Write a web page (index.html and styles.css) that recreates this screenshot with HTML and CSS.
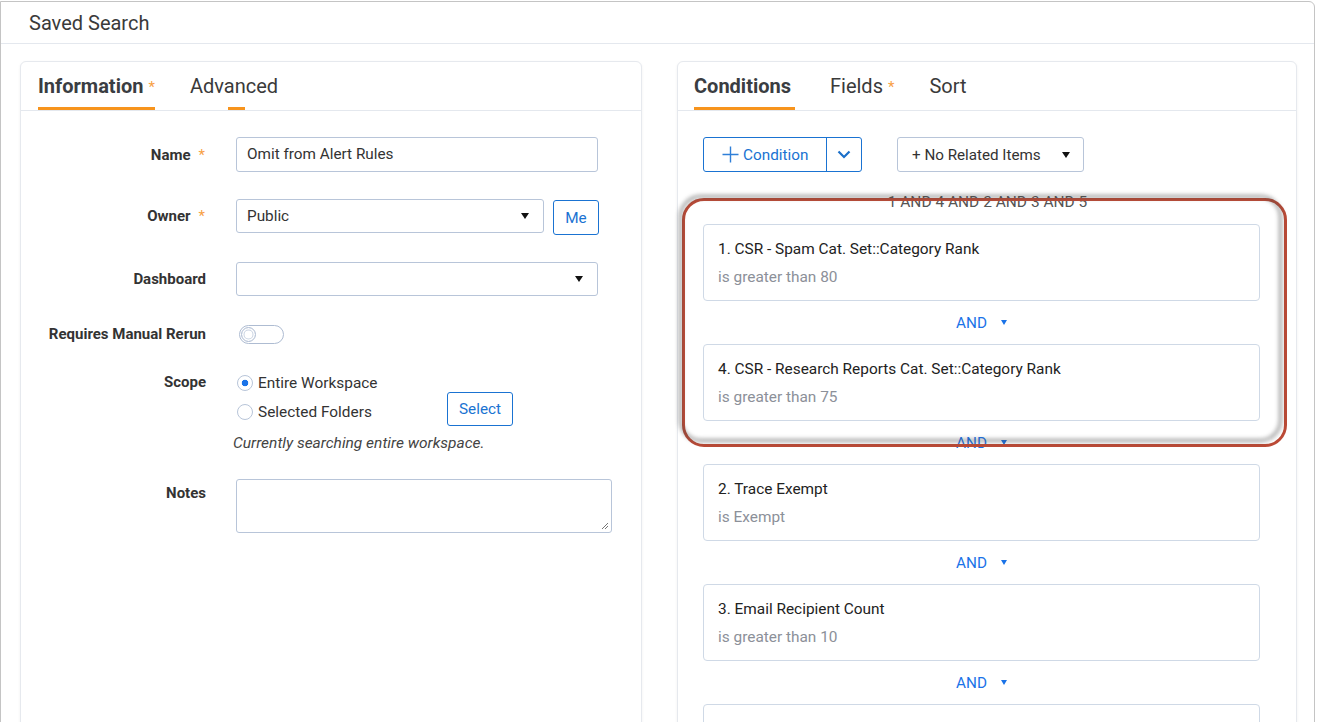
FILE: index.html
```html
<!DOCTYPE html>
<html>
<head>
<meta charset="utf-8">
<title>Saved Search</title>
<link rel="stylesheet" href="styles.css">
</head>
<body>
<div class="page">
  <div class="page-header">Saved Search</div>
  <div class="page-body">
    <section class="card">
      <div class="tabs">
        <div class="tab active">Information<span class="tab-req">*</span></div>
        <div class="tab hover">Advanced</div>
      </div>
      <div class="form">
        <div class="row r-name">
          <div class="lbl">Name<span class="req">*</span></div>
          <div class="field w-wide">Omit from Alert Rules</div>
        </div>
        <div class="row r-owner">
          <div class="lbl">Owner<span class="req">*</span></div>
          <div class="field select w-owner"><span>Public</span><span class="caret"></span></div>
          <div class="btn-outline me">Me</div>
        </div>
        <div class="row r-dash">
          <div class="lbl">Dashboard</div>
          <div class="field select w-wide"><span></span><span class="caret"></span></div>
        </div>
        <div class="row r-toggle">
          <div class="lbl">Requires Manual Rerun</div>
          <div class="toggle"><span class="knob"></span></div>
        </div>
        <div class="row r-scope">
          <div class="lbl lbl-line">Scope</div>
          <div class="scope">
            <div class="radio-line"><span class="radio checked"></span>Entire Workspace</div>
            <div class="radio-line"><span class="radio-wrap"><span class="radio"></span>Selected Folders</span><span class="btn-outline select-btn">Select</span></div>
            <div class="scope-note">Currently searching entire workspace.</div>
          </div>
        </div>
        <div class="row r-notes">
          <div class="lbl lbl-notes">Notes</div>
          <div class="textarea"><svg class="grip" width="8" height="8" viewBox="0 0 8 8"><path d="M7 1 L1 7 M7 4 L4 7" stroke="#777" stroke-width="1"/></svg></div>
        </div>
      </div>
    </section>

    <section class="card card-right">
      <div class="tabs">
        <div class="tab active tab-cond">Conditions</div>
        <div class="tab">Fields<span class="tab-req">*</span></div>
        <div class="tab">Sort</div>
      </div>
      <div class="cond-body">
        <div class="toolbar">
          <div class="btn-group">
            <div class="bg-main">
              <svg width="17" height="17" viewBox="0 0 17 17"><path d="M8.5 0.5 V16.5 M0.5 8.5 H16.5" stroke="#2f7fd8" stroke-width="1.4"/></svg>
              <span>Condition</span>
            </div>
            <div class="bg-arrow">
              <svg width="14" height="9" viewBox="0 0 14 9"><path d="M1.5 1.5 L7 7 L12.5 1.5" fill="none" stroke="#1a6fc9" stroke-width="2.2"/></svg>
            </div>
          </div>
          <div class="related">
            <span>+ No Related Items</span><span class="caret"></span>
          </div>
        </div>
        <div class="expr">1 AND 4 AND 2 AND 3 AND 5</div>
        <div class="cond-list">
          <div class="cond">
            <div class="cond-title">1. CSR - Spam Cat. Set::Category Rank</div>
            <div class="cond-sub">is greater than 80</div>
          </div>
          <div class="and-row"><span>AND</span><span class="and-caret"></span></div>
          <div class="cond">
            <div class="cond-title">4. CSR - Research Reports Cat. Set::Category Rank</div>
            <div class="cond-sub">is greater than 75</div>
          </div>
          <div class="and-row"><span>AND</span><span class="and-caret"></span></div>
          <div class="cond">
            <div class="cond-title">2. Trace Exempt</div>
            <div class="cond-sub">is Exempt</div>
          </div>
          <div class="and-row"><span>AND</span><span class="and-caret"></span></div>
          <div class="cond">
            <div class="cond-title">3. Email Recipient Count</div>
            <div class="cond-sub">is greater than 10</div>
          </div>
          <div class="and-row"><span>AND</span><span class="and-caret"></span></div>
          <div class="cond">
            <div class="cond-title">5. Has Attachment Count</div>
            <div class="cond-sub">is greater than 0</div>
          </div>
        </div>
      </div>
      <div class="highlight"></div>
    </section>
  </div>
</div>
</body>
</html>
```

FILE: styles.css
```css
* { box-sizing: border-box; }

html, body {
  margin: 0;
  padding: 0;
  background: #ffffff;
  overflow: hidden;
  height: 722px;
}

body {
  font-family: Roboto, "Liberation Sans", Arial, sans-serif;
  color: #333;
}

.page {
  width: 1315px;
  height: 780px;
  margin-top: 1px;
  border: 1px solid #c4c4c4;
  border-radius: 0 6px 0 0;
  background: #fff;
}

.page-header {
  height: 42px;
  line-height: 42px;
  padding-left: 28px;
  font-size: 20px;
  color: #3a3a3a;
  border-bottom: 1px solid #e4e8ee;
}

.page-body {
  display: grid;
  grid-template-columns: 622px 620px;
  column-gap: 35px;
  padding: 17px 16px 0 19px;
}

.card {
  border: 1px solid #e6e9ee;
  border-radius: 6px;
  box-shadow: 0 1px 3px rgba(0, 0, 0, 0.06);
  height: 700px;
  background: #fff;
}

.card-right {
  position: relative;
}

/* Tabs */
.tabs {
  display: flex;
  gap: 35px;
  padding-left: 17px;
  height: 49px;
  border-bottom: 1px solid #e4e8ee;
}

.tab {
  height: 48px;
  padding-top: 14px;
  line-height: 20px;
  font-size: 20px;
  color: #3a3a3a;
  border-bottom: 3px solid transparent;
  white-space: nowrap;
}

.tab.active {
  font-weight: bold;
  color: #3a3d42;
  border-bottom-color: #f7941d;
}

.tab-cond {
  margin-left: -1px;
  padding-right: 4px;
}

.tab.hover {
  background-image: linear-gradient(#f7941d, #f7941d);
  background-size: 17px 3px;
  background-repeat: no-repeat;
  background-position: 54% 100%;
  border-bottom: 0;
  height: 48px;
}

.tab-req {
  color: #f7a045;
  font-size: 15px;
  font-weight: normal;
  margin-left: 5px;
  vertical-align: 1px;
}

/* Form */
.form {
  padding: 26px 0 0 27px;
}

.row {
  display: flex;
  align-items: center;
}

.r-owner { margin-top: 27px; align-items: flex-start; }
.r-owner .lbl { line-height: 34px; }
.r-dash { margin-top: 27px; }
.r-toggle { margin-top: 28px; height: 20px; }
.r-scope { margin-top: 24px; align-items: flex-start; }
.r-notes { margin-top: 26px; align-items: flex-start; }

.lbl {
  width: 158px;
  margin-right: 30px;
  text-align: right;
  font-size: 15px;
  font-weight: bold;
  color: #333;
  white-space: nowrap;
  flex-shrink: 0;
}

.lbl-line { line-height: 29px; }
.lbl-notes { line-height: 28px; }

.req {
  color: #f7a045;
  font-weight: normal;
  margin-left: 8px;
  margin-right: 1px;
}

.field {
  height: 35px;
  border: 1px solid #b8c5d9;
  border-radius: 3px;
  padding: 0 10px;
  font-size: 15.3px;
  line-height: 33px;
  color: #333;
  background: #fff;
}

.r-owner .field, .r-dash .field { height: 34px; line-height: 32px; }

.w-wide { width: 362px; }
.w-owner { width: 308px; }

.select {
  display: flex;
  align-items: center;
  justify-content: space-between;
  padding-right: 14px;
}

.caret {
  width: 0;
  height: 0;
  border-left: 4.5px solid transparent;
  border-right: 4.5px solid transparent;
  border-top: 6px solid #111;
}

.btn-outline {
  border: 1px solid #1a73d2;
  border-radius: 3px;
  color: #1a73d2;
  font-size: 15.3px;
  display: flex;
  align-items: center;
  justify-content: center;
  background: #fff;
}

.me {
  width: 46px;
  height: 35px;
  margin-left: 9px;
  margin-top: 1px;
}

.toggle {
  width: 45px;
  height: 19px;
  border: 1px solid #aebcd2;
  border-radius: 10px;
  margin-left: 3px;
  display: flex;
  align-items: center;
  padding-left: 1px;
}

.knob {
  width: 15px;
  height: 15px;
  border-radius: 50%;
  border: 1px solid #aebcd2;
  box-shadow: inset 0 0 0 1.5px #fff, inset 0 0 0 2.5px #c9d3e2;
}

.scope {
  display: flex;
  flex-direction: column;
  font-size: 15.4px;
  color: #333;
}

.radio-line {
  display: flex;
  align-items: center;
  height: 29px;
}

.radio-wrap {
  display: flex;
  align-items: center;
  width: 211px;
}

.radio {
  width: 16px;
  height: 16px;
  border-radius: 50%;
  border: 1px solid #b8c5d9;
  margin-left: 1px;
  margin-right: 5px;
  flex-shrink: 0;
  background: #fff;
}

.radio.checked {
  background: radial-gradient(circle, #1a73e8 0, #1a73e8 3px, #fff 3.6px);
}

.select-btn {
  width: 66px;
  height: 34px;
  align-self: flex-start;
  margin-top: -5px;
}

.scope-note {
  margin-top: 7px;
  margin-left: -3px;
  font-style: italic;
  font-size: 15.5px;
  line-height: 20px;
  color: #444;
}

.textarea {
  width: 376px;
  height: 54px;
  border: 1px solid #b8c5d9;
  border-radius: 3px;
  display: flex;
  justify-content: flex-end;
  align-items: flex-end;
  padding: 0 2px 2px 0;
}

/* Conditions */
.cond-body {
  padding: 26px 0 0 25px;
}

.toolbar {
  display: flex;
  gap: 35px;
}

.btn-group {
  display: flex;
  height: 35px;
  border: 1px solid #1a73d2;
  border-radius: 3px;
}

.bg-main {
  width: 123px;
  display: flex;
  align-items: center;
  gap: 4px;
  padding-left: 18px;
  color: #1a73d2;
  font-size: 15.3px;
  border-right: 1px solid #1a73d2;
}

.bg-arrow {
  width: 34px;
  display: flex;
  align-items: center;
  justify-content: center;
}

.related {
  width: 187px;
  height: 35px;
  border: 1px solid #b8c5d9;
  border-radius: 3px;
  display: flex;
  align-items: center;
  justify-content: space-between;
  padding: 0 13px 0 14px;
  font-size: 15.2px;
  color: #333;
}

.expr {
  width: 557px;
  margin-top: 20px;
  padding-left: 12px;
  line-height: 20px;
  text-align: center;
  font-size: 15.5px;
  color: #555;
}

.cond-list {
  width: 557px;
  margin-top: 12px;
}

.cond {
  height: 77px;
  border: 1px solid #cfd9e6;
  border-radius: 4px;
  padding: 14px 14px 0;
}

.cond-title {
  font-size: 15.4px;
  line-height: 20px;
  color: #222;
}

.cond-sub {
  margin-top: 8px;
  font-size: 15.4px;
  line-height: 20px;
  color: #8c9099;
}

.and-row {
  height: 43px;
  display: flex;
  align-items: center;
  justify-content: center;
  gap: 14px;
  font-size: 15.3px;
  color: #1a73e8;
}

.and-caret {
  width: 0;
  height: 0;
  border-left: 3.5px solid transparent;
  border-right: 3.5px solid transparent;
  border-top: 5px solid #1a73e8;
}

/* Annotation overlay */
.highlight {
  position: absolute;
  left: 4px;
  top: 136px;
  width: 605px;
  height: 249px;
  border: 3px solid #bb4a36;
  border-radius: 22px;
  pointer-events: none;
}

.highlight::before {
  content: "";
  position: absolute;
  left: -6px;
  top: -6px;
  right: 2px;
  bottom: 2px;
  border: 3px solid rgba(70, 70, 70, 0.55);
  border-radius: 22px;
  filter: blur(2px);
}
```
